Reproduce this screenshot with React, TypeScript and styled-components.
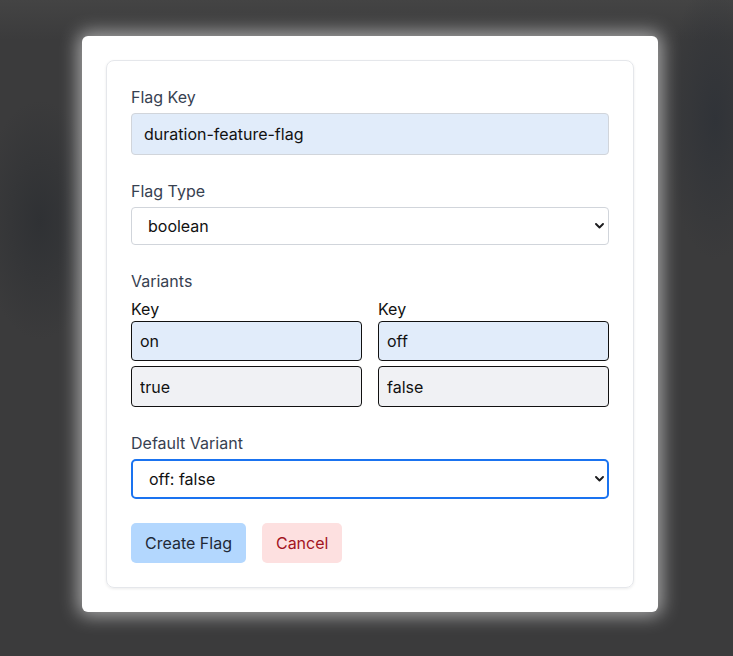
import React, { FC, useState } from 'react';
import styled, { createGlobalStyle } from 'styled-components';

const GlobalStyle = createGlobalStyle`
  html, body {
    margin: 0;
    padding: 0;
    background: #3b3b3c;
  }
  body {
    font-family: Inter, "Liberation Sans", sans-serif;
  }
`;

const Page = styled.div`
  position: relative;
  width: 733px;
  height: 656px;
  overflow: hidden;
  box-sizing: border-box;
  padding: 36px 0 0 82px;
  background:
    radial-gradient(ellipse 60px 120px at 40px 220px, #2f3134 0%, rgba(47, 49, 52, 0) 100%),
    radial-gradient(ellipse 50px 140px at 715px 120px, #303338 0%, rgba(48, 51, 56, 0) 100%),
    linear-gradient(180deg, #444 0px, #3b3b3c 40px, #3b3b3c 100%);
`;

const Modal = styled.div`
  width: 576px;
  box-sizing: border-box;
  padding: 24px;
  background: #ffffff;
  border-radius: 6px;
  box-shadow: 0 0 18px 4px rgba(255, 255, 255, 0.55);
`;

const Card = styled.form`
  display: flex;
  flex-direction: column;
  gap: 24px;
  padding: 24px;
  border: 1px solid #e5e7eb;
  border-radius: 8px;
  box-shadow: 0 1px 3px rgba(0, 0, 0, 0.08);
`;

const Field = styled.div`
  display: flex;
  flex-direction: column;
`;

const Label = styled.label<{ $strong?: boolean }>`
  font-size: 16px;
  line-height: 24px;
  color: ${({ $strong }) => ($strong ? '#111111' : '#374151')};
  margin-bottom: ${({ $strong }) => ($strong ? '0' : '4px')};
`;

const TextInput = styled.input<{ $tone?: 'blue' | 'gray'; $dark?: boolean; $height?: number }>`
  box-sizing: border-box;
  width: 100%;
  height: ${({ $height }) => $height ?? 42}px;
  padding: 0 ${({ $dark }) => ($dark ? 8 : 12)}px;
  font-family: inherit;
  font-size: 16px;
  color: #111111;
  background: ${({ $tone }) => ($tone === 'gray' ? '#f0f1f4' : '#e1ecfa')};
  border: 1px solid ${({ $dark }) => ($dark ? '#111111' : '#d1d5db')};
  border-radius: 4px;
  outline: none;
`;

const SelectWrap = styled.div`
  position: relative;
`;

const Select = styled.select<{ $focused?: boolean }>`
  box-sizing: border-box;
  width: 100%;
  height: ${({ $focused }) => ($focused ? 40 : 38)}px;
  padding: 0 30px 0 16px;
  appearance: none;
  font-family: inherit;
  font-size: 16px;
  color: #111111;
  background: #ffffff;
  border: ${({ $focused }) => ($focused ? '2px solid #1a73f0' : '1px solid #d1d5db')};
  border-radius: ${({ $focused }) => ($focused ? 5 : 4)}px;
  outline: none;
`;

const Chevron = styled.svg`
  position: absolute;
  right: 5px;
  top: 50%;
  width: 9px;
  height: 6px;
  margin-top: -3px;
  pointer-events: none;
`;

const VariantGrid = styled.div`
  display: grid;
  grid-template-columns: 1fr 1fr;
  column-gap: 16px;
`;

const VariantColumn = styled.div`
  display: flex;
  flex-direction: column;
`;

const VariantInputs = styled.div`
  display: flex;
  flex-direction: column;
  gap: 5px;
`;

const Actions = styled.div`
  display: flex;
  gap: 16px;
`;

const Button = styled.button<{ $variant: 'primary' | 'danger' }>`
  height: 40px;
  padding: 0 14px;
  font-family: inherit;
  font-size: 16px;
  border: none;
  border-radius: 5px;
  cursor: pointer;
  background: ${({ $variant }) => ($variant === 'primary' ? '#b3d7fe' : '#fde0e0')};
  color: ${({ $variant }) => ($variant === 'primary' ? '#1f2937' : '#a3141e')};
`;

const SelectField: FC<{ value: string; options: string[]; focused?: boolean }> = ({
  value,
  options,
  focused,
}) => (
  <SelectWrap>
    <Select $focused={focused} defaultValue={value}>
      {options.map((o) => (
        <option key={o}>{o}</option>
      ))}
    </Select>
    <Chevron viewBox="0 0 9 6" fill="none">
      <path d="M1 1l3.5 3.5L8 1" stroke="#1c1c1e" strokeWidth="1.9" strokeLinecap="round" strokeLinejoin="round" />
    </Chevron>
  </SelectWrap>
);

const variants = [
  { key: 'on', value: 'true' },
  { key: 'off', value: 'false' },
];

const App: FC = () => {
  const [flagKey, setFlagKey] = useState('duration-feature-flag');

  return (
    <>
      <GlobalStyle />
      <Page>
        <Modal>
          <Card onSubmit={(e) => e.preventDefault()}>
            <Field>
              <Label>Flag Key</Label>
              <TextInput value={flagKey} onChange={(e) => setFlagKey(e.target.value)} />
            </Field>

            <Field>
              <Label>Flag Type</Label>
              <SelectField value="boolean" options={['boolean', 'string', 'number', 'object']} />
            </Field>

            <Field>
              <Label>Variants</Label>
              <VariantGrid>
                {variants.map((v) => (
                  <VariantColumn key={v.key}>
                    <Label $strong>Key</Label>
                    <VariantInputs>
                      <TextInput $dark $height={40} defaultValue={v.key} />
                      <TextInput $dark $tone="gray" $height={41} defaultValue={v.value} />
                    </VariantInputs>
                  </VariantColumn>
                ))}
              </VariantGrid>
            </Field>

            <Field>
              <Label>Default Variant</Label>
              <SelectField focused value="off: false" options={['on: true', 'off: false']} />
            </Field>

            <Actions>
              <Button type="submit" $variant="primary">Create Flag</Button>
              <Button type="button" $variant="danger">Cancel</Button>
            </Actions>
          </Card>
        </Modal>
      </Page>
    </>
  );
};

export default App;
